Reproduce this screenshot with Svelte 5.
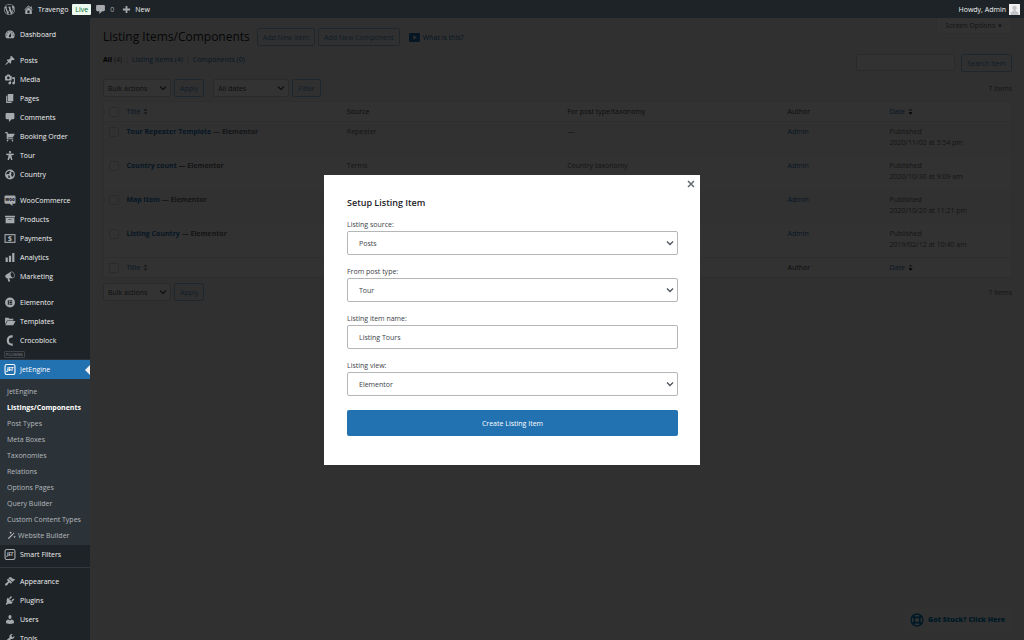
<script lang="ts">
	type MenuItem = { label: string; icon: string };

	const groups: MenuItem[][] = [
		[{ label: 'Dashboard', icon: 'dashboard' }],
		[
			{ label: 'Posts', icon: 'pin' },
			{ label: 'Media', icon: 'media' },
			{ label: 'Pages', icon: 'pages' },
			{ label: 'Comments', icon: 'comment' },
			{ label: 'Booking Order', icon: 'cart' },
			{ label: 'Tour', icon: 'person' },
			{ label: 'Country', icon: 'globe' },
		],
		[
			{ label: 'WooCommerce', icon: 'woo' },
			{ label: 'Products', icon: 'archive' },
			{ label: 'Payments', icon: 'payments' },
			{ label: 'Analytics', icon: 'chart' },
			{ label: 'Marketing', icon: 'megaphone' },
		],
		[
			{ label: 'Elementor', icon: 'elementor' },
			{ label: 'Templates', icon: 'folder' },
			{ label: 'Crocoblock', icon: 'croco' },
		],
	];

	const submenu = [
		'JetEngine',
		'Listings/Components',
		'Post Types',
		'Meta Boxes',
		'Taxonomies',
		'Relations',
		'Options Pages',
		'Query Builder',
		'Custom Content Types',
		'Website Builder',
	];

	const bottomItems: MenuItem[] = [
		{ label: 'Appearance', icon: 'brush' },
		{ label: 'Plugins', icon: 'plug' },
		{ label: 'Users', icon: 'user' },
		{ label: 'Tools', icon: 'wrench' },
	];

	const rows = [
		{ title: 'Tour Repeater Template', source: 'Repeater', type: '—', date: '2020/11/02 at 5:54 pm' },
		{ title: 'Country count', source: 'Terms', type: 'Country taxonomy', date: '2020/10/30 at 9:09 am' },
		{ title: 'Map Item', source: '', type: '', date: '2020/10/20 at 11:21 pm' },
		{ title: 'Listing Country', source: '', type: '', date: '2019/02/12 at 10:40 am' },
	];

	// 20x20 admin menu glyphs
	const paths: Record<string, string> = {
		wp: 'M20 10c0-5.51-4.49-10-10-10C4.48 0 0 4.49 0 10c0 5.52 4.48 10 10 10 5.51 0 10-4.48 10-10zM7.78 15.37L4.37 6.22c.55-.02 1.17-.08 1.17-.08.5-.06.44-1.13-.06-1.11 0 0-1.45.11-2.37.11-.18 0-.37 0-.58-.01C4.12 2.69 6.87 1.11 10 1.11c2.33 0 4.45.87 6.05 2.34-.68-.11-1.65.39-1.65 1.58 0 .74.45 1.36.9 2.1.35.61.55 1.36.55 2.46 0 1.49-1.4 5-1.4 5l-3.03-8.37c.54-.02.82-.17.82-.17.5-.05.44-1.25-.06-1.22 0 0-1.44.12-2.38.12-.87 0-2.33-.12-2.33-.12-.5-.03-.56 1.2-.06 1.22l.92.08 1.26 3.41zM17.41 10c.24-.64.74-1.87.43-4.25.7 1.29 1.05 2.71 1.05 4.25 0 3.29-1.73 6.24-4.4 7.78.97-2.59 1.94-5.2 2.92-7.78zM6.1 18.09C3.12 16.65 1.11 13.53 1.11 10c0-1.3.23-2.48.72-3.59C3.25 10.3 4.67 14.2 6.1 18.09zm4.03-6.63l2.58 6.98c-.86.29-1.76.45-2.71.45-.79 0-1.57-.11-2.29-.33.81-2.38 1.62-4.74 2.42-7.1z',
		home: 'M16 8.5l1.53 1.53-1.06 1.06L10 4.6l-6.47 6.49-1.06-1.06L10 2.5l4 4v-2h2v4zm-6-2.46l6 5.99V18H4v-5.97zM12 17v-5H8v5h4z',
		plus: 'M8 2h4v6h6v4h-6v6H8v-6H2V8h6z',
		dashboard: 'M3.76 17h12.48A8.5 8.5 0 1 0 3.76 17zM10 4c.55 0 1 .45 1 1s-.45 1-1 1-1-.45-1-1 .45-1 1-1zM6 6c.55 0 1 .45 1 1s-.45 1-1 1-1-.45-1-1 .45-1 1-1zm8 0c.55 0 1 .45 1 1s-.45 1-1 1-1-.45-1-1 .45-1 1-1zm-5.37 5.55L12 7v6c0 1.1-.9 2-2 2s-2-.9-2-2c0-.57.24-1.08.63-1.45zM4 10c.55 0 1 .45 1 1s-.45 1-1 1-1-.45-1-1 .45-1 1-1zm12 0c.55 0 1 .45 1 1s-.45 1-1 1-1-.45-1-1 .45-1 1-1z',
		pin: 'M10.44 3.02l1.82-1.82 6.36 6.35-1.83 1.82c-1.05-.68-2.48-.57-3.41.36l-.75.75c-.92.93-1.04 2.35-.35 3.41l-1.83 1.82-2.41-2.41-2.8 2.79c-.42.42-3.38 2.71-3.8 2.29s1.86-3.39 2.28-3.81l2.79-2.79L4.1 9.36l1.83-1.82c1.05.69 2.48.57 3.4-.36l.75-.75c.93-.92 1.05-2.35.36-3.41z',
		media: 'M13 11V4c0-.55-.45-1-1-1h-1.67L9 1H5L3.67 3H2c-.55 0-1 .45-1 1v7c0 .55.45 1 1 1h10c.55 0 1-.45 1-1zM7 4.5c1.38 0 2.5 1.12 2.5 2.5S8.38 9.5 7 9.5 4.5 8.38 4.5 7 5.62 4.5 7 4.5zM14 6h5v10.5c0 1.38-1.12 2.5-2.5 2.5S14 17.88 14 16.5s1.12-2.5 2.5-2.5c.17 0 .34.02.5.05V9h-3V6zm-4 8.05V13h2v3.5c0 1.38-1.12 2.5-2.5 2.5S7 17.88 7 16.5 8.12 14 9.5 14c.17 0 .34.02.5.05z',
		pages: 'M6 15V2h10v13H6zm-1 1h8v2H3V5h2v11z',
		comment: 'M4 2h12c1.1 0 2 .9 2 2v7c0 1.1-.9 2-2 2h-3l-5 5v-5H4c-1.1 0-2-.9-2-2V4c0-1.1.9-2 2-2z',
		cart: 'M6 13h9c.55 0 1 .45 1 1s-.45 1-1 1H5c-.55 0-1-.45-1-1V4H2c-.55 0-1-.45-1-1s.45-1 1-1h3c.55 0 1 .45 1 1v2h13l-4 7H6v1zm-.5 3c.83 0 1.5.67 1.5 1.5S6.33 19 5.5 19 4 18.33 4 17.5 4.67 16 5.5 16zm9 0c.83 0 1.5.67 1.5 1.5s-.67 1.5-1.5 1.5-1.5-.67-1.5-1.5.67-1.5 1.5-1.5z',
		person: 'M10 1.600c1.100 0 2 .9 2 2s-.9 2-2 2-2-.9-2-2 .9-2 2-2zM3 7q7-1 14 0v2l-4.500.500L14.500 18h-2.500L10 13l-2 5H5.500L7.500 9.500 3 9z',
		globe: 'M10 1a9 9 0 1 0 0 18 9 9 0 0 0 0-18zM9 3l2 1-1 2-2 1 1 2H6l-2 1-1-2 2-3zM13 5l3 1 1 4-2 4-2-1-1-3 1-2-1-1zM7 11l3 2-1 4-2-1z',
		archive: 'M19 3v3H1V3h18zM2 7h16v10H2V7zm11 3V9H7v1h6z',
		chart: 'M18 18V2h-4v16h4zm-6 0V7H8v11h4zm-6 0v-8H2v8h4z',
		megaphone: 'M18.15 5.94c.46 1.62.38 3.22-.02 4.48-.42 1.28-1.26 2.18-2.3 2.48-.16.06-.26.06-.4.06-.06.02-.12.02-.18.02-.06.02-.14.02-.22.02h-6.8l2.22 5.5c.02.14-.06.26-.14.34-.08.1-.24.16-.34.16H6.95c-.1 0-.26-.06-.34-.16-.08-.08-.16-.2-.14-.34l-1-5.5H4.25l-.02-.02c-.5.06-1.08-.18-1.54-.62s-.88-1.08-1.06-1.88c-.24-.8-.2-1.56-.02-2.2.18-.62.58-1.08 1.06-1.3l.02-.02 9-5.4c.1-.06.18-.1.24-.16.06-.04.14-.08.24-.12.16-.08.28-.12.5-.18 1.04-.3 2.24.1 3.22.98s1.84 2.24 2.26 3.86zm-2.58 5.98h-.02c.4-.1.74-.34 1.04-.7.58-.7.86-1.76.86-3.04 0-.64-.1-1.3-.28-1.98-.34-1.36-1.02-2.5-1.78-3.24s-1.68-1.1-2.46-.88c-.82.22-1.4.96-1.7 2-.32 1.04-.28 2.36.06 3.72.38 1.36 1 2.5 1.8 3.24.78.74 1.62 1.1 2.48.88z',
		elementor: 'M10 1a9 9 0 1 0 0 18 9 9 0 0 0 0-18zM6 6h2v8H6zM9 6h5v2H9zM9 9h5v2H9zM9 12h5v2H9z',
		folder: 'M1 3h6l2 2h7v3H5l-4 7zM5.5 9H20l-4 8H1.500z',
		brush: 'M14.48 11.06L7.41 3.99l1.5-1.5c.5-.56 2.3-.47 3.51.32 1.21.8 1.43 1.28 2.91 2.1 1.18.64 2.45 1.26 4.45.85zm-.71.71L6.7 4.7 4.93 6.47c-.39.39-.39 1.02 0 1.41l1.06 1.06c.39.39.39 1.03 0 1.42-.6.6-1.43 1.11-2.21 1.69-.35.26-.7.53-1.01.84C1.43 14.23.4 16.08 1.4 17.07c.99 1 2.84-.03 4.18-1.36.31-.31.58-.66.85-1.02.57-.78 1.08-1.61 1.69-2.21.39-.39 1.02-.39 1.41 0l1.06 1.06c.39.39 1.02.39 1.41 0z',
		plug: 'M13.11 4.36L9.87 7.6 8 5.73l3.24-3.24c.35-.34 1.05-.2 1.56.32.52.51.66 1.21.31 1.55zm-8 1.77l.91-1.12 9.01 9.01-1.19.84c-.71.71-2.63 1.16-3.82 1.16H6.14L4.9 17.26c-.59.59-1.54.59-2.12 0-.59-.58-.59-1.53 0-2.12l1.24-1.24v-3.88c0-1.13.4-3.19 1.09-3.89zm7.26 3.97l3.24-3.24c.34-.35 1.04-.21 1.55.31.52.51.66 1.21.31 1.55l-3.24 3.25z',
		user: 'M10 9.25c-2.27 0-2.73-3.44-2.73-3.44C7 4.02 7.82 2 9.97 2c2.16 0 2.98 2.02 2.71 3.81 0 0-.41 3.44-2.68 3.44zm0 2.57L12.72 10c2.39 0 4.52 2.33 4.52 4.53v2.49s-3.65 1.13-7.24 1.13c-3.65 0-7.24-1.13-7.24-1.13v-2.49c0-2.25 1.94-4.48 4.47-4.48z',
		wrench: 'M16.68 9.77c-1.34 1.34-3.3 1.67-4.95.99l-5.41 6.52c-.99.99-2.59.99-3.58 0s-.99-2.59 0-3.57l6.52-5.42c-.68-1.65-.35-3.61.99-4.95 1.28-1.28 3.12-1.62 4.72-1.06l-2.89 2.89 2.82 2.82 2.86-2.87c.53 1.58.18 3.39-1.08 4.65z',
		wand: 'M2 16L12 6l2 2L4 18zM13 5l1.500-1.500 2 2L15 7zM8 1l1 2 2 1-2 1-1 2-1-2-2-1 2-1zM17 10l1 2 2 1-2 1-1 2-1-2-2-1 2-1z',
		video: 'M2 2h16c1 0 2 1 2 2v12c0 1-1 2-2 2H2c-1 0-2-1-2-2V4c0-1 1-2 2-2zM8 6v8l6-4z',
		avatar: 'M0 0h20v20H0zM10 3a4 4 0 0 0-2 7.500v2L3 15v5h14v-5l-5-2.500v-2A4 4 0 0 0 10 3z',
	};

	let open = $state(true);
	let name = $state('Listing Tours');
	let source = $state('Posts');
	let postType = $state('Tour');
	let view = $state('Elementor');
</script>

{#snippet icon(id: string)}
	<svg class="icon" viewBox="0 0 20 20" aria-hidden="true">
		{#if id === 'jet'}
			<rect class="line" x="1" y="1" width="18" height="18" rx="3" />
			<text x="10" y="13" text-anchor="middle" font-size="8" font-weight="900" font-style="italic">JET</text>
		{:else if id === 'woo'}
			<path d="M2 1h16q2 0 2 2v11q0 2-2 2h-4l1 4-6-4H2q-2 0-2-2V3q0-2 2-2z" />
			<text class="cut" x="10" y="11" text-anchor="middle" font-size="8" font-weight="900">woo</text>
		{:else if id === 'payments'}
			<rect class="line" x="1" y="3" width="18" height="14" />
			<text x="10" y="14" text-anchor="middle" font-size="12" font-weight="900">$</text>
		{:else if id === 'croco'}
			<path class="thick" d="M15 2.500C8 2 6 6 6 10s3 8 9 7.500" />
		{:else if id === 'help'}
			<circle class="line" cx="10" cy="10" r="8.500" />
			<circle class="line" cx="10" cy="10" r="4" />
			<path class="thick" d="M4 4l3 3M16 4l-3 3M4 16l3-3M16 16l-3-3" />
		{:else}
			<path fill-rule="evenodd" d={paths[id]} />
		{/if}
	</svg>
{/snippet}

{#snippet menuItem(item: MenuItem)}
	<li><a class="menu-link" href="#top">{@render icon(item.icon)}{item.label}</a></li>
{/snippet}

{#snippet sorter(down: boolean)}
	<svg class="sorter" class:down viewBox="0 0 6 10" aria-hidden="true">
		<path d="M3 1l2.500 3h-5z" /><path class="arrow" d="M3 9l2.500-3h-5z" />
	</svg>
{/snippet}

{#snippet headings(id: string)}
	<tr>
		<th class="check"><input type="checkbox" aria-label="Select all {id}" /></th>
		<th><a href="#top">Title {@render sorter(false)}</a></th>
		<th>Source</th>
		<th>For post type/taxonomy</th>
		<th class="author">Author</th>
		<th class="date"><a href="#top">Date {@render sorter(true)}</a></th>
	</tr>
{/snippet}

{#snippet bulk()}
	<div class="actions">
		<select class="bulk" aria-label="Bulk actions"><option>Bulk actions</option></select>
		<button class="button">Apply</button>
	</div>
{/snippet}

<div class="admin" id="top">
	<header class="adminbar">
		<a href="#top" aria-label="About WordPress">{@render icon('wp')}</a>
		<a class="site" href="#top">{@render icon('home')}Travengo</a>
		<span class="live">Live</span>
		<a class="count" href="#top">{@render icon('comment')}0</a>
		<a class="new" href="#top">{@render icon('plus')}New</a>
		<a class="howdy" href="#top">Howdy, Admin{@render icon('avatar')}</a>
	</header>

	<div class="body">
		<nav class="sidebar">
			{#each groups as group}
				<ul class="group">
					{#each group as item}
						{@render menuItem(item)}
					{/each}
				</ul>
			{/each}
			<div class="plugins-label"><span>PLUGINS</span></div>
			<a class="menu-link current" href="#top">{@render icon('jet')}JetEngine</a>
			<ul class="submenu">
				{#each submenu as label}
					<li>
						<a href="#top" class:active={label === 'Listings/Components'}>
							{#if label === 'Website Builder'}{@render icon('wand')}{/if}{label}
						</a>
					</li>
				{/each}
			</ul>
			<a class="menu-link" href="#top">{@render icon('jet')}Smart Filters</a>
			<hr />
			<ul>
				{#each bottomItems as item}
					{@render menuItem(item)}
				{/each}
			</ul>
		</nav>

		<main>
			<div class="title-row">
				<h1>Listing Items/Components</h1>
				<button class="button">Add New Item</button>
				<button class="button">Add New Component</button>
				<a class="what" href="#top">{@render icon('video')}What is this?</a>
				<button class="screen-options">Screen Options <span>▼</span></button>
			</div>

			<div class="filter-row">
				<div class="views">
					<a class="all" href="#top"><b>All</b> (4)</a><span>|</span><a href="#top">Listing Items (4)</a><span>|</span><a href="#top">Components (0)</a>
				</div>
				<div class="search">
					<input type="search" aria-label="Search" />
					<button class="button">Search Item</button>
				</div>
			</div>

			<div class="tablenav top">
				{@render bulk()}
				<div class="actions">
					<select class="dates" aria-label="Filter by date"><option>All dates</option></select>
					<button class="button">Filter</button>
				</div>
				<span class="total">7 items</span>
			</div>

			<table>
				<thead>{@render headings('top')}</thead>
				<tbody>
					{#each rows as row}
						<tr>
							<td class="check"><input type="checkbox" aria-label="Select {row.title}" /></td>
							<td class="name"><a href="#top">{row.title}</a> — Elementor</td>
							<td>{row.source}</td>
							<td>{row.type}</td>
							<td><a href="#top">Admin</a></td>
							<td>Published<br />{row.date}</td>
						</tr>
					{/each}
				</tbody>
				<tfoot>{@render headings('bottom')}</tfoot>
			</table>

			<div class="tablenav">
				{@render bulk()}
				<span class="total">7 items</span>
			</div>

			<a class="stuck" href="#top">{@render icon('help')}Got Stuck? Click Here</a>
		</main>
	</div>
</div>

{#if open}
	<div class="overlay">
		<form class="popup" onsubmit={(e) => e.preventDefault()}>
			<button class="close" type="button" aria-label="Close" onclick={() => (open = false)}>
				<svg viewBox="0 0 8 8"><path d="M1 1l6 6M7 1l-6 6" /></svg>
			</button>
			<h2>Setup Listing Item</h2>
			<div class="field">
				<label for="source">Listing source:</label>
				<select id="source" bind:value={source}>
					<option>Posts</option>
					<option>Terms</option>
					<option>Users</option>
				</select>
			</div>
			<div class="field">
				<label for="post-type">From post type:</label>
				<select id="post-type" bind:value={postType}>
					<option>Tour</option>
					<option>Posts</option>
				</select>
			</div>
			<div class="field">
				<label for="name">Listing item name:</label>
				<input id="name" type="text" bind:value={name} />
			</div>
			<div class="field">
				<label for="view">Listing view:</label>
				<select id="view" bind:value={view}>
					<option>Elementor</option>
					<option>Blocks</option>
				</select>
			</div>
			<button class="create" type="submit">Create Listing Item</button>
		</form>
	</div>
{/if}

<style>
	:global(body) {
		margin: 0;
		background: #f0f0f1;
	}

	.admin,
	.overlay {
		font-family: 'Open Sans', 'Noto Sans', sans-serif;
		font-size: 7px;
		line-height: 11px;
		color: #646970;
	}

	.admin {
		display: flex;
		flex-direction: column;
		height: 100vh;
		overflow: hidden;
	}

	* {
		box-sizing: border-box;
	}

	a {
		color: #2271b1;
		text-decoration: none;
	}

	ul {
		list-style: none;
		margin: 0;
		padding: 0;
	}

	button,
	input,
	select {
		margin: 0;
		font: inherit;
		color: inherit;
	}

	.icon {
		flex-shrink: 0;
		width: 11px;
		height: 11px;
		fill: currentColor;
	}

	.line {
		fill: none;
		stroke: currentColor;
		stroke-width: 2;
	}

	.thick {
		fill: none;
		stroke: currentColor;
		stroke-width: 4;
	}

	.cut {
		fill: #1d2327;
	}

	/* top bar and menu stay above the overlay */
	.adminbar {
		position: relative;
		z-index: 2;
		flex-shrink: 0;
		display: flex;
		align-items: center;
		height: 18px;
		padding: 0 4px;
		background: #1d2327;
	}

	.adminbar a {
		display: flex;
		align-items: center;
		gap: 4px;
		color: #f0f0f1;
	}

	.adminbar .icon {
		color: #a7aaad;
	}

	.adminbar .site {
		margin-left: 8px;
	}

	.live {
		margin: 0 4px;
		padding: 0 3px;
		border-radius: 1px;
		background: #edfaef;
		color: #00702a;
	}

	.adminbar .count {
		color: #a7aaad;
	}

	.adminbar .new {
		margin-left: 8px;
	}

	.adminbar .new .icon {
		width: 9px;
	}

	.adminbar .howdy {
		gap: 3px;
		margin-left: auto;
	}

	.adminbar .howdy .icon {
		color: #f0f0f1;
		background: #c3c4c7;
	}

	.body {
		flex: 1;
		display: flex;
		min-height: 0;
	}

	.sidebar {
		position: relative;
		z-index: 2;
		flex-shrink: 0;
		width: 90px;
		padding-top: 7px;
		background: #1d2327;
		overflow: hidden;
	}

	.group + .group {
		margin-top: 7px;
	}

	.menu-link {
		display: flex;
		align-items: center;
		gap: 4px;
		height: 19px;
		padding-left: 4px;
		color: #f0f0f1;
	}

	.menu-link .icon {
		width: 12px;
		color: #a7aaad;
	}

	.plugins-label {
		display: flex;
		align-items: center;
		height: 10px;
		padding-left: 4px;
		border-bottom: 1px solid #2c3338;
		font-size: 4px;
		line-height: 5px;
		color: #8c8f94;
	}

	.plugins-label span {
		padding: 0 1px;
		border: 1px solid #3c434a;
		border-radius: 1px;
	}

	.current {
		position: relative;
		background: #2271b1;
		color: #fff;
	}

	.current .icon {
		color: #fff;
	}

	.current::after {
		content: '';
		position: absolute;
		right: 0;
		top: 5px;
		border: 5px solid transparent;
		border-left: 0;
		border-right-color: #f0f0f1;
	}

	.submenu {
		padding: 4px 0 2px;
		background: #2c3338;
	}

	.submenu a {
		display: flex;
		align-items: center;
		gap: 2px;
		height: 16px;
		padding-left: 7px;
		color: #b4b9be;
		white-space: nowrap;
	}

	.submenu .icon {
		width: 9px;
		height: 9px;
	}

	.submenu .active {
		color: #fff;
		font-weight: 700;
	}

	hr {
		height: 1px;
		margin: 3px 0 4px;
		border: 0;
		background: #32383d;
	}

	main {
		flex: 1;
		min-width: 0;
		padding: 0 12px 0 13px;
	}

	.title-row {
		display: flex;
		align-items: center;
		gap: 3px;
		padding-top: 2px;
		height: 36px;
	}

	h1 {
		margin: 0 4px 0 0;
		font-size: 12px;
		line-height: 18px;
		font-weight: 400;
		color: #1d2327;
	}

	.button {
		height: 18px;
		padding: 0 5px;
		border: 1px solid #9dbfdb;
		border-radius: 2px;
		background: #f0f0f1;
		color: #4d8ec4;
		white-space: nowrap;
	}

	.what {
		display: flex;
		align-items: center;
		gap: 3px;
		margin-left: 6px;
	}

	.screen-options {
		align-self: flex-start;
		height: 16px;
		margin-top: -2px;
		margin-left: auto;
		padding: 0 8px;
		border: 1px solid #e4e4e6;
		border-top: 0;
		border-radius: 0 0 2px 2px;
		background: #fafafa;
		color: #646970;
	}

	.screen-options span {
		font-size: 6px;
	}

	.filter-row {
		display: flex;
		justify-content: space-between;
		height: 17px;
	}

	.views {
		display: flex;
		gap: 3px;
		color: #a7aaad;
	}

	.all {
		color: #50575e;
	}

	.all b {
		color: #000;
	}

	.search {
		display: flex;
		gap: 6px;
	}

	.search input {
		width: 99px;
		height: 17px;
		border: 1px solid #d0d1d4;
		border-radius: 2px;
		background: #fafafa;
	}

	.tablenav {
		display: flex;
		align-items: center;
		gap: 9px;
		padding: 5px 0 4px;
	}

	.tablenav.top {
		padding-top: 8px;
	}

	.actions {
		display: flex;
		gap: 3px;
	}

	select {
		appearance: none;
		border: 1px solid #d0d1d4;
		border-radius: 2px;
		background: #fff url("data:image/svg+xml,%3Csvg xmlns='http://www.w3.org/2000/svg' viewBox='0 0 8 8'%3E%3Cpath d='M1 2.500l3 3 3-3' fill='none' stroke='%2350575e' stroke-width='1.400'/%3E%3C/svg%3E") no-repeat right 3px center / 8px 8px;
	}

	.actions select {
		height: 18px;
		padding: 0 4px;
		color: #3c434a;
	}

	.bulk {
		width: 68px;
	}

	.dates {
		width: 76px;
	}

	.total {
		margin-left: auto;
	}

	table {
		width: 100%;
		table-layout: fixed;
		border: 1px solid #e4e4e6;
		border-collapse: collapse;
		background: #fafafa;
	}

	th,
	td {
		padding: 0 3px;
		text-align: left;
		vertical-align: top;
		font-weight: 400;
	}

	th {
		height: 20px;
		vertical-align: middle;
		color: #3c434a;
	}

	td {
		height: 34px;
		padding-top: 4px;
	}

	thead th {
		border-bottom: 1px solid #e4e4e6;
	}

	tfoot th {
		border-top: 1px solid #e4e4e6;
	}

	tbody tr:nth-child(odd) {
		background: #f4f5f5;
	}

	.check {
		width: 20px;
		padding: 0 0 0 5px;
	}

	td.check {
		padding-top: 5px;
	}

	.check input {
		display: block;
		appearance: none;
		width: 10px;
		height: 10px;
		border: 1px solid #d0d1d4;
		border-radius: 2px;
	}

	.author {
		width: 102px;
	}

	.date {
		width: 125px;
	}

	.name {
		font-weight: 700;
	}

	th a {
		display: flex;
		align-items: center;
		gap: 3px;
	}

	.sorter {
		width: 5px;
		height: 9px;
		fill: #787c82;
	}

	.down .arrow {
		fill: #000;
	}

	.stuck {
		position: fixed;
		right: 12px;
		bottom: 8px;
		display: flex;
		align-items: center;
		gap: 4px;
		height: 25px;
		padding: 0 7px 0 5px;
		background: #f3f4f4;
		color: #007cba;
		font-weight: 800;
	}

	.stuck .icon {
		width: 14px;
		height: 14px;
	}

	.overlay {
		position: fixed;
		inset: 0;
		z-index: 1;
		display: flex;
		align-items: center;
		justify-content: center;
		background: rgba(0, 0, 0, 0.8);
	}

	.popup {
		position: relative;
		width: 376px;
		max-width: 90vw;
		padding: 22px 22px 29px 23px;
		background: #fff;
		color: #3c434a;
	}

	.close {
		position: absolute;
		top: 4px;
		right: 4px;
		display: flex;
		padding: 1px;
		border: 0;
		background: none;
	}

	.close svg {
		width: 8px;
		height: 8px;
		stroke: #646970;
		stroke-width: 1.5;
	}

	h2 {
		margin: 0 0 9px;
		font-size: 9px;
		line-height: 12px;
		font-weight: 600;
		color: #1d2327;
	}

	.field {
		display: flex;
		flex-direction: column;
		margin-bottom: 10px;
	}

	.field label {
		line-height: 13px;
	}

	.field input,
	.field select {
		width: 100%;
		height: 24px;
		padding: 0 11px;
		border: 1px solid #b4b7ba;
		border-radius: 2px;
	}

	.create {
		display: block;
		width: 100%;
		height: 26px;
		margin-top: 14px;
		border: 0;
		border-radius: 2px;
		background: #2271b1;
		color: #fff;
	}
</style>
